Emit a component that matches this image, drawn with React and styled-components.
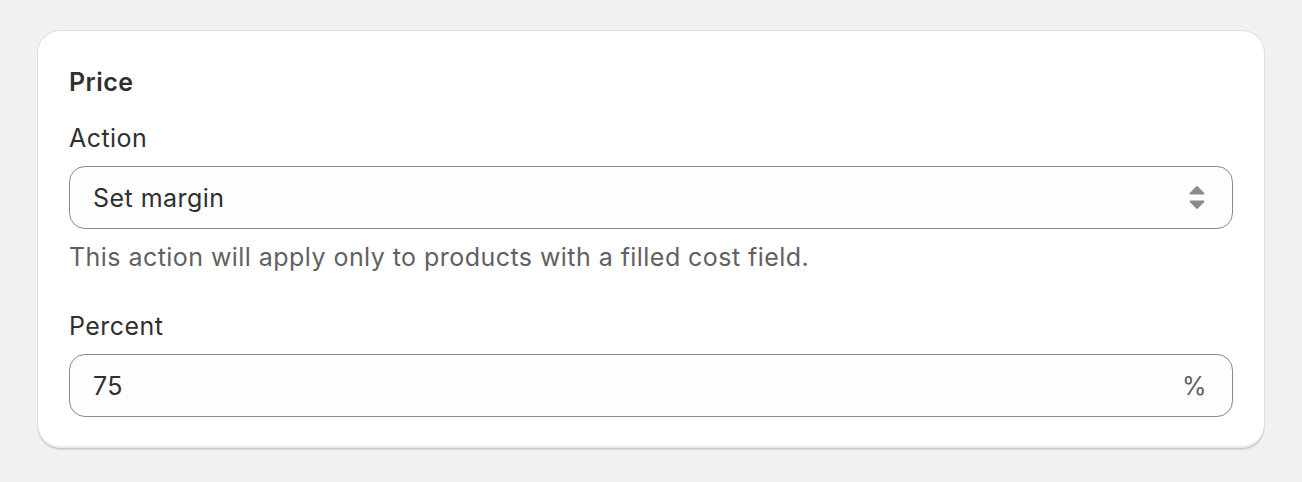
import styled, { createGlobalStyle } from "styled-components";

const GlobalStyle = createGlobalStyle`
  html, body {
    margin: 0;
    background: #f1f1f1;
    font-family: Inter, "Noto Sans", "Liberation Sans", sans-serif;
    color: #303030;
    -webkit-font-smoothing: antialiased;
  }
`;

const Page = styled.div`
  padding: 31px 38px;
`;

const Card = styled.section`
  background: #ffffff;
  border-radius: 22px;
  padding: 31px;
  box-shadow: 0 0 0 1px rgba(0, 0, 0, 0.07), 0 2px 1px rgba(0, 0, 0, 0.1),
    inset 0 -2px 0 rgba(0, 0, 0, 0.08);
  font-size: 25px;
  letter-spacing: 0.45px;
`;

const Title = styled.h2`
  margin: 0;
  font-size: 25px;
  line-height: 40px;
  font-weight: 600;
`;

const Field = styled.div`
  margin-top: ${(p) => p.$gap}px;
`;

const Label = styled.label`
  display: block;
  line-height: 40px;
  font-weight: 400;
  margin-bottom: 8px;
`;

const Box = styled.div`
  display: flex;
  align-items: center;
  height: 63px;
  box-sizing: border-box;
  padding: 0 24px 0 23px;
  border: 1px solid #8a8a8a;
  border-radius: 16px;
  background: #fdfdfd;
`;

const Value = styled.span`
  flex: 1;
`;

const Suffix = styled.span`
  color: #616161;
  margin-right: 1px;
`;

const Help = styled.p`
  margin: 8px 0 0;
  line-height: 40px;
  color: #616161;
`;

const Arrows = styled.svg`
  margin-right: 3px;
  flex: none;
`;

const SelectArrows = () => (
  <Arrows width="16" height="23" viewBox="0 0 16 23" fill="#8a8a8a">
    <path d="M7.2 0.5a1 1 0 0 1 1.6 0l6.4 6.6c.5.5.1 1.4-.6 1.4H1.4c-.7 0-1.1-.9-.6-1.4z" />
    <path d="M7.2 22.5a1 1 0 0 0 1.6 0l6.4-6.6c.5-.5.1-1.4-.6-1.4H1.4c-.7 0-1.1.9-.6 1.4z" />
  </Arrows>
);

export default function App() {
  return (
    <Page>
      <GlobalStyle />
      <Card>
        <Title>Price</Title>
        <Field $gap={16}>
          <Label>Action</Label>
          <Box>
            <Value>Set margin</Value>
            <SelectArrows />
          </Box>
          <Help>This action will apply only to products with a filled cost field.</Help>
        </Field>
        <Field $gap={29}>
          <Label>Percent</Label>
          <Box>
            <Value>75</Value>
            <Suffix>%</Suffix>
          </Box>
        </Field>
      </Card>
    </Page>
  );
}
